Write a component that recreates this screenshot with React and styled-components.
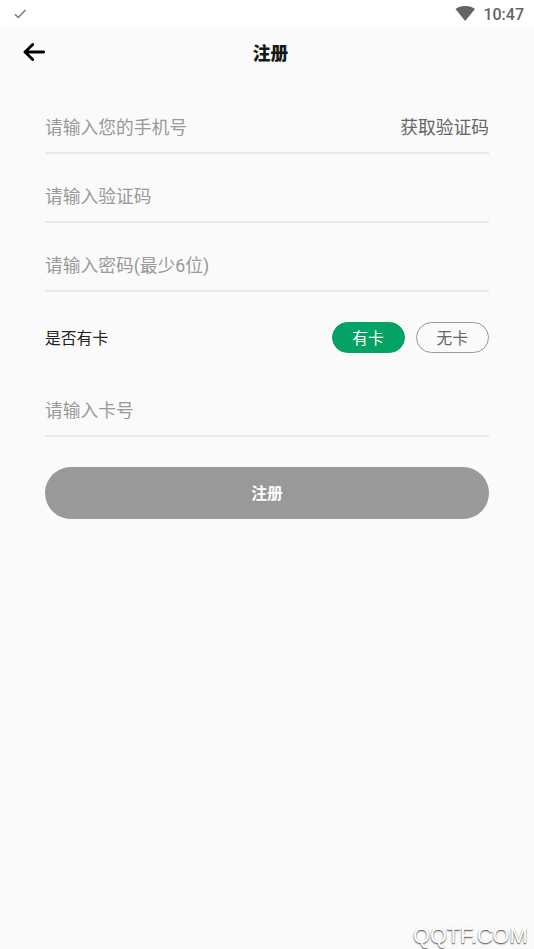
import React, { useState } from "react";
import styled, { createGlobalStyle } from "styled-components";

const GlobalStyle = createGlobalStyle`
  * {
    box-sizing: border-box;
  }
  body {
    margin: 0;
    background-color: #fafafa;
    font-family: Roboto, "Noto Sans CJK SC", sans-serif;
  }
`;

const Container = styled.div`
  display: flex;
  flex-direction: column;
  height: 100vh;
  overflow: hidden;
  background-color: #fafafa;
`;

const StatusBar = styled.div`
  display: flex;
  align-items: center;
  justify-content: space-between;
  height: 27px;
  padding: 0 10px 0 14px;
  background-color: white;
`;

const StatusRight = styled.div`
  display: flex;
  align-items: center;
  gap: 8px;
`;

const Clock = styled.span`
  color: #646464;
  font-size: 16px;
  font-weight: 500;
  line-height: 20px;
  padding-top: 3px;
`;

const Header = styled.header`
  display: grid;
  grid-template-columns: 60px 1fr 60px;
  align-items: center;
  height: 50px;
`;

const BackButton = styled.button`
  display: flex;
  padding: 0 0 0 22px;
  border: none;
  background: none;
  cursor: pointer;
`;

const Title = styled.h1`
  margin: 0;
  padding: 4px 0 0 7px;
  color: #151a17;
  font-size: 17.7px;
  font-weight: 900;
  line-height: 26px;
  text-align: center;
`;

const Form = styled.main`
  display: flex;
  flex: 1;
  flex-direction: column;
  padding: 7.5px 45px 0;
`;

const Field = styled.div`
  display: flex;
  align-items: flex-end;
  justify-content: space-between;
  height: 69.25px;
  padding-bottom: 11px;
  border-bottom: 2px solid #e9e9e9;
  font-size: 17.75px;
  line-height: 26px;
`;

const Hint = styled.label`
  color: #999;
`;

const CodeLink = styled.span`
  color: #666;
  cursor: pointer;
`;

const CardRow = styled.div`
  display: flex;
  align-items: center;
  justify-content: space-between;
  height: 75px;
  padding-top: 15.5px;
`;

const CardLabel = styled.span`
  color: #222;
  font-size: 15.8px;
`;

const Options = styled.div`
  display: flex;
  gap: 11px;
`;

const Option = styled.button`
  width: 73.25px;
  height: 31px;
  padding: 1px 0 0;
  border: 1.4px solid ${props => (props.$active ? "#05a266" : "#999")};
  border-radius: 16px;
  background-color: ${props => (props.$active ? "#05a266" : "transparent")};
  color: ${props => (props.$active ? "white" : "#666")};
  font-family: inherit;
  font-size: 15.8px;
  line-height: 29px;
  cursor: pointer;
`;

const SubmitButton = styled.button`
  flex: none;
  height: 52px;
  margin-top: 30px;
  border: none;
  border-radius: 26px;
  background-color: #999;
  color: white;
  font-family: inherit;
  font-size: 15.8px;
  font-weight: bold;
`;

const Watermark = styled.div`
  align-self: flex-end;
  padding-right: 6.5px;
  color: white;
  font-family: "Liberation Sans", Arial, sans-serif;
  font-size: 21.7px;
  line-height: 27px;
  text-shadow: 0 1px 1px #666, 0 1px 2px #999;
`;

const CheckIcon = () => (
  <svg width="13" height="10" viewBox="0 0 13 10">
    <path d="M1 5.2 4.3 8.5 11.5 1" fill="none" stroke="#777" strokeWidth="1.4" />
  </svg>
);

const WifiIcon = () => (
  <svg width="20" height="16" viewBox="0 0 20 16">
    <path d="M.5 2.9C6-1 14.5-1 20 2.9L10.2 15Z" fill="#646464" />
  </svg>
);

const BackIcon = () => (
  <svg width="24" height="20" viewBox="0 0 24 20">
    <path
      d="M10.7 2.5 3 10l7.7 7.5M3 10h18.6"
      fill="none"
      stroke="black"
      strokeWidth="2.9"
      strokeLinecap="round"
      strokeLinejoin="round"
    />
  </svg>
);

const App = () => {
  const [hasCard, setHasCard] = useState(true);

  return (
    <Container>
      <GlobalStyle />
      <StatusBar>
        <CheckIcon />
        <StatusRight>
          <WifiIcon />
          <Clock>10:47</Clock>
        </StatusRight>
      </StatusBar>
      <Header>
        <BackButton aria-label="返回">
          <BackIcon />
        </BackButton>
        <Title>注册</Title>
      </Header>
      <Form>
        <Field>
          <Hint>请输入您的手机号</Hint>
          <CodeLink>获取验证码</CodeLink>
        </Field>
        <Field>
          <Hint>请输入验证码</Hint>
        </Field>
        <Field>
          <Hint>请输入密码(最少6位)</Hint>
        </Field>
        <CardRow>
          <CardLabel>是否有卡</CardLabel>
          <Options>
            <Option $active={hasCard} onClick={() => setHasCard(true)}>
              有卡
            </Option>
            <Option $active={!hasCard} onClick={() => setHasCard(false)}>
              无卡
            </Option>
          </Options>
        </CardRow>
        <Field>
          <Hint>请输入卡号</Hint>
        </Field>
        <SubmitButton>注册</SubmitButton>
      </Form>
      <Watermark>QQTF.COM</Watermark>
    </Container>
  );
};

export default App;
